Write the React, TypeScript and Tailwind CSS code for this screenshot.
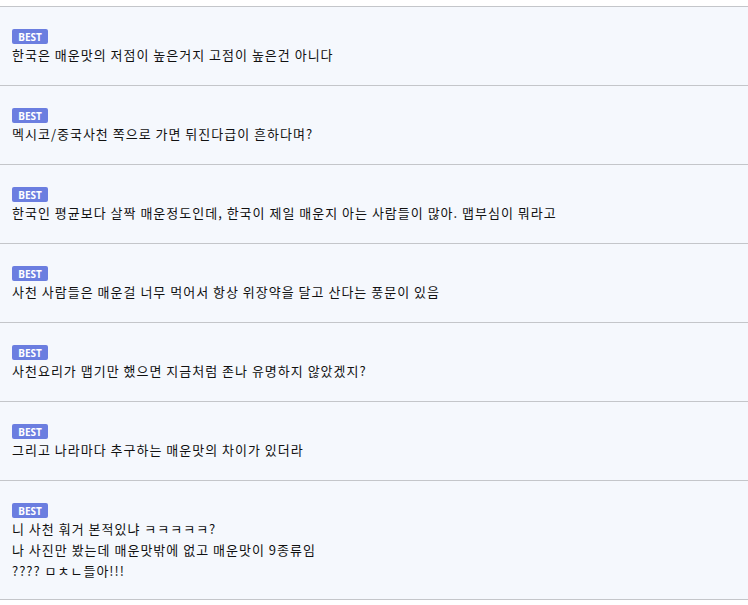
const comments: string[][] = [
  ["한국은 매운맛의 저점이 높은거지 고점이 높은건 아니다"],
  ["멕시코/중국사천 쪽으로 가면 뒤진다급이 흔하다며?"],
  ["한국인 평균보다 살짝 매운정도인데, 한국이 제일 매운지 아는 사람들이 많아. 맵부심이 뭐라고"],
  ["사천 사람들은 매운걸 너무 먹어서 항상 위장약을 달고 산다는 풍문이 있음"],
  ["사천요리가 맵기만 했으면 지금처럼 존나 유명하지 않았겠지?"],
  ["그리고 나라마다 추구하는 매운맛의 차이가 있더라"],
  [
    "니 사천 훠거 본적있냐 ㅋㅋㅋㅋㅋ?",
    "나 사진만 봤는데 매운맛밖에 없고 매운맛이 9종류임",
    "???? ㅁㅊㄴ들아!!!",
  ],
];

export default function App() {
  return (
    <div className="w-[748px] h-[605px] bg-white pt-[6px] overflow-hidden font-['Noto_Sans_CJK_KR',_'Noto_Sans',_sans-serif]">
      <ul className="border-b border-[#c4c6ca]">
        {comments.map((lines, i) => (
          <li
            key={i}
            className="border-t border-[#c4c6ca] bg-[#f5f8fd] px-3 pt-[22px] pb-[20px] last:pb-[18px]"
          >
            <span className="flex h-[15px] w-[36px] items-center justify-center rounded-[2px] bg-[#6b7ee0] text-[10px] font-bold leading-none text-white font-['Noto_Sans',_sans-serif]">
              BEST
            </span>
            <div className="text-[13px] leading-[21px] tracking-[1px] text-[#111]">
              {lines.map((l, j) => (
                <p key={j}>{l}</p>
              ))}
            </div>
          </li>
        ))}
      </ul>
    </div>
  );
}
